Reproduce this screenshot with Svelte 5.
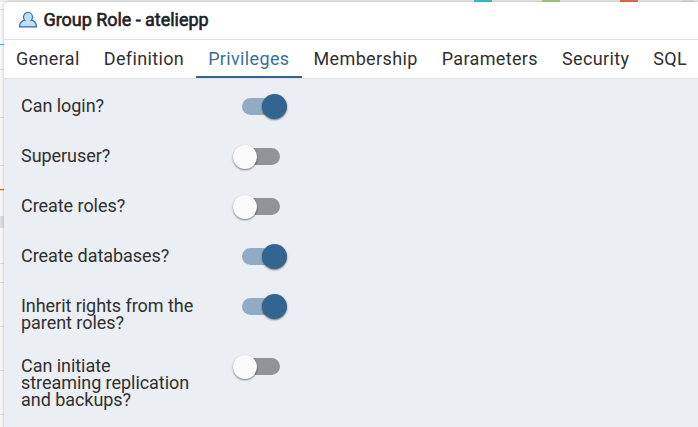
<script>
  const tabs = ['General', 'Definition', 'Privileges', 'Membership', 'Parameters', 'Security', 'SQL'];
  const active = 'Privileges';
  let rows = $state([
    { lines: ['Can login?'], on: true },
    { lines: ['Superuser?'], on: false },
    { lines: ['Create roles?'], on: false },
    { lines: ['Create databases?'], on: true },
    { lines: ['Inherit rights from the', 'parent roles?'], on: true },
    { lines: ['Can initiate', 'streaming replication', 'and backups?'], on: false }
  ]);
</script>

<div class="page">
  <svg class="backdrop" width="698" height="427" aria-hidden="true">
    <rect width="698" height="427" fill="#fcfcfc" />
    <rect width="698" height="2" fill="#ededed" />
    <rect x="474" width="18" height="2" fill="#38c4d5" />
    <rect x="542" width="18" height="2" fill="#a9d080" />
    <rect x="620" width="18" height="2" fill="#e6724e" />
    <rect x="682" width="12" height="2" fill="#dcdee6" />
    <g fill="#e2e2e4">
      <rect y="9" width="4" height="1" />
      <rect y="69" width="4" height="1" />
      <rect y="117" width="4" height="1" />
      <rect y="165" width="4" height="1" />
      <rect y="263" width="4" height="1" />
      <rect y="282" width="4" height="1" />
      <rect y="326" width="4" height="1" />
      <rect y="370" width="4" height="1" />
      <rect y="414" width="4" height="1" />
    </g>
    <rect y="44" width="4" height="1" fill="#00cfe8" />
    <rect y="189" width="4" height="1" fill="#f0602c" />
    <rect y="190" width="4" height="1" fill="#f6d9c4" />
    <rect y="216" width="4" height="12" fill="#e0e2e7" />
  </svg>
  <section class="dialog">
    <header>
      <svg width="20" height="18" viewBox="0 0 20 18" fill="#c0dff3" stroke="#2c66d0" stroke-width="1.2" stroke-linejoin="round">
        <path d="M1.5 15.9 C1.5 12.2 4 9.6 7.2 8.9 H12.8 C16 9.6 18.5 12.2 18.5 15.9 Z" />
        <circle cx="10" cy="6" r="4.5" />
        <path d="M7.6 9.2 H12.4 L12.8 11 H7.2 Z" stroke="none" />
      </svg>
      <h1>Group Role - ateliepp</h1>
    </header>
    <nav>
      {#each tabs as tab}
        <button class="tab" class:active={tab === active}>{tab}</button>
      {/each}
    </nav>
    <div class="form">
      {#each rows as row}
        <div class="row">
          <div class="label">
            {#each row.lines as line}<span>{line}</span>{/each}
          </div>
          <button class="switch" class:on={row.on} role="switch" aria-checked={row.on} aria-label={row.lines.join(' ')} onclick={() => (row.on = !row.on)}>
            <i></i>
          </button>
        </div>
      {/each}
    </div>
  </section>
</div>

<style>
  .page {
    position: relative;
    box-sizing: border-box;
    width: 698px;
    height: 427px;
    padding: 2px 0 0 4px;
    overflow: hidden;
    font-family: Roboto, sans-serif;
    color: #303030;
  }
  .backdrop {
    position: absolute;
    inset: 0;
  }
  .dialog {
    position: relative;
    width: 710px;
    height: 440px;
    background: #ebeef3;
    border-radius: 5px;
    overflow: hidden;
    box-shadow: 0 0 4px rgba(0, 0, 0, 0.25);
  }
  header {
    display: flex;
    align-items: center;
    box-sizing: border-box;
    height: 38px;
    padding: 0 0 2px 14px;
    background: #fff;
    border-bottom: 1px solid #dde0e6;
  }
  h1 {
    margin: 0 0 0 5.5px;
    font-size: 18px;
    font-weight: 400;
    line-height: 20px;
    letter-spacing: -0.04px;
    color: #222;
    -webkit-text-stroke: 0.6px #222;
  }
  nav {
    display: flex;
    box-sizing: border-box;
    height: 39px;
    background: #fff;
    border-bottom: 1px solid #dde0e6;
  }
  button {
    border: 0;
    padding: 0;
    background: none;
    font: inherit;
    color: inherit;
  }
  .tab {
    flex: none;
    padding: 0 12px;
    font-size: 18px;
    letter-spacing: 0.36px;
    border-bottom: 2px solid transparent;
  }
  .tab.active {
    color: #3a6f9b;
    border-bottom-color: #326690;
  }
  .form {
    display: flex;
    flex-direction: column;
    gap: 26px;
    padding: 14px 0 0 17px;
  }
  .row {
    display: flex;
    align-items: flex-start;
    min-height: 24px;
  }
  .label {
    width: 211px;
    padding-top: 4px;
    margin-bottom: -4px;
    font-size: 18px;
    line-height: 17px;
    letter-spacing: -0.05px;
  }
  .label span {
    display: block;
    white-space: nowrap;
  }
  .switch {
    position: relative;
    width: 55px;
    height: 25px;
    margin-bottom: -1px;
  }
  .switch::before {
    content: '';
    position: absolute;
    left: 10px;
    top: 5px;
    width: 38px;
    height: 17px;
    border-radius: 9px;
    background: #929396;
  }
  .switch i {
    position: absolute;
    left: 1px;
    top: 2px;
    width: 24px;
    height: 24px;
    border-radius: 50%;
    background: #fafafa;
    box-shadow: 0 1px 2px rgba(0, 0, 0, 0.5);
  }
  .switch.on::before {
    background: #91abc5;
  }
  .switch.on i {
    left: 30px;
    top: 1px;
    width: 25px;
    height: 25px;
    background: #326690;
  }
</style>
